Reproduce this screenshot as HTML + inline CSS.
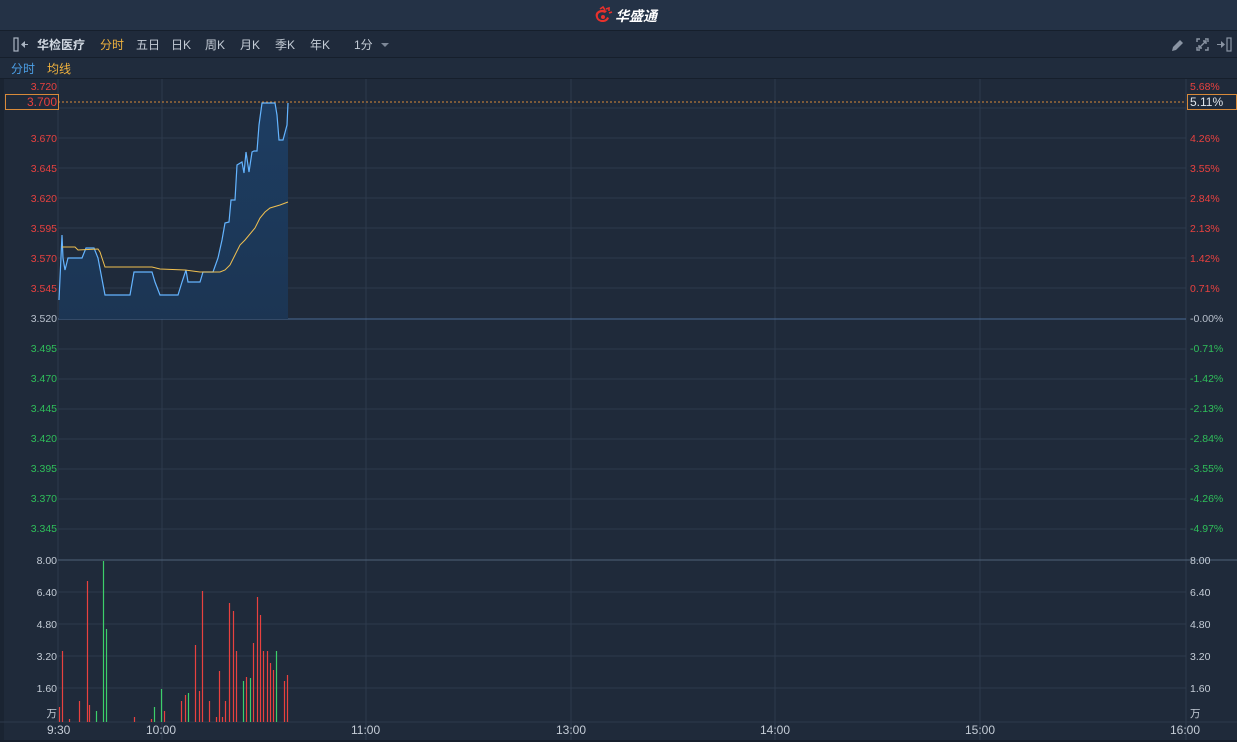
<!DOCTYPE html>
<html><head><meta charset="utf-8"><style>
html,body{margin:0;padding:0;background:#1f2a3a;width:1237px;height:742px;overflow:hidden}
svg{display:block}
text{font-family:"Liberation Sans","Noto Sans CJK SC",sans-serif}
</style></head><body>
<svg width="1237" height="742" viewBox="0 0 1237 742">
<defs><linearGradient id="af" x1="0" y1="0" x2="0" y2="1"><stop offset="0" stop-color="#1d3d62"/><stop offset="1" stop-color="#1c3553"/></linearGradient></defs>
<rect width="1237" height="742" fill="#1f2a3a"/>
<rect x="0" y="0" width="1237" height="30" fill="#243246"/>
<rect x="0" y="30" width="1237" height="1" fill="#161f2c"/>
<g transform="translate(594,7)">
<path d="M2 10 C0 4 8 1 13 4 L11 6 C7 4 3 6 4 10 C5 14 12 14 13 10 L15 11 C13 17 3 16 2 10Z" fill="#e8312c"/>
<path d="M6 2 L9 0 L11 3 M12 2 L15 1 L15 4 M15 6 L18 5" stroke="#e8312c" stroke-width="1.6" fill="none"/>
<circle cx="9" cy="10" r="2" fill="#e8312c"/>
</g>
<text x="615" y="21" font-size="14" font-weight="bold" fill="#ffffff" font-style="italic">华盛通</text>
<rect x="0" y="31" width="1237" height="27" fill="#1f2a3b"/>
<rect x="0" y="57" width="1237" height="1" fill="#161f2c"/>
<rect x="14" y="38" width="4" height="13" fill="none" stroke="#aab4c2" stroke-width="1.2"/>
<path d="M21 44.5 L25 41 L25 48Z M24 44 h4 v1 h-4z" fill="#aab4c2"/>
<g font-size="12" fill="#c4ccd6">
<text x="37" y="49" font-weight="bold" fill="#d2d9e2">华检医疗</text>
<text x="100" y="49" fill="#f0b23e">分时</text>
<text x="136" y="49">五日</text>
<text x="171" y="49">日K</text>
<text x="205" y="49">周K</text>
<text x="240" y="49">月K</text>
<text x="275" y="49">季K</text>
<text x="310" y="49">年K</text>
<text x="354" y="49">1分</text>
</g>
<path d="M381 43 L389 43 L385 47Z" fill="#7d8898"/>
<path d="M1172 51 L1173 47 L1180 40 L1183 43 L1176 50Z" fill="#8a94a3"/>
<g stroke="#8a94a3" stroke-width="1.4" fill="none">
<path d="M1197 42 v-3 h3 M1205 39 h3 v3 M1208 47 v3 h-3 M1200 50 h-3 v-3"/>
<path d="M1199 48 L1206 41 M1203 41 h3 v3 M1199 45 v3 h3"/>
</g>
<path d="M1217 44 h4 v-3 l4 3.5 l-4 3.5 v-3 h-4z" fill="#8a94a3"/>
<rect x="1227" y="38" width="4" height="13" fill="none" stroke="#8a94a3" stroke-width="1.2"/>
<rect x="0" y="58" width="1237" height="21" fill="#202c3d"/>
<rect x="0" y="78" width="1237" height="1" fill="#161f2c"/>
<text x="11" y="73" font-size="12" fill="#4c9fe6">分时</text>
<text x="47" y="73" font-size="12" fill="#f0b23e">均线</text>
<rect x="0" y="79" width="4" height="663" fill="#1a2432"/>
<g stroke="#2d3a4c" stroke-width="1">
<line x1="58" y1="79" x2="58" y2="722"/>
<line x1="1186" y1="79" x2="1186" y2="742"/>
<line x1="162" y1="79" x2="162" y2="742"/>
<line x1="366" y1="79" x2="366" y2="742"/>
<line x1="571" y1="79" x2="571" y2="742"/>
<line x1="775" y1="79" x2="775" y2="742"/>
<line x1="980" y1="79" x2="980" y2="742"/>
<line x1="58" y1="108" x2="1186" y2="108"/>
<line x1="58" y1="138" x2="1186" y2="138"/>
<line x1="58" y1="168" x2="1186" y2="168"/>
<line x1="58" y1="198" x2="1186" y2="198"/>
<line x1="58" y1="228" x2="1186" y2="228"/>
<line x1="58" y1="258" x2="1186" y2="258"/>
<line x1="58" y1="288" x2="1186" y2="288"/>
<line x1="58" y1="349" x2="1186" y2="349"/>
<line x1="58" y1="379" x2="1186" y2="379"/>
<line x1="58" y1="409" x2="1186" y2="409"/>
<line x1="58" y1="439" x2="1186" y2="439"/>
<line x1="58" y1="469" x2="1186" y2="469"/>
<line x1="58" y1="499" x2="1186" y2="499"/>
<line x1="58" y1="529" x2="1186" y2="529"/>
<line x1="58" y1="592" x2="1186" y2="592"/>
<line x1="58" y1="624" x2="1186" y2="624"/>
<line x1="58" y1="656" x2="1186" y2="656"/>
<line x1="58" y1="688" x2="1186" y2="688"/>
<line x1="0" y1="722" x2="1237" y2="722"/>
</g>
<line x1="58" y1="319" x2="1186" y2="319" stroke="#4a6a94" stroke-width="1"/>
<line x1="58" y1="560" x2="1237" y2="560" stroke="#4f6278" stroke-width="1"/>
<path d="M59 300 L62 235 L63 258 L65 270 L68 258 L82 258 L86 248 L94 248 L98 258 L105 295 L130 295 L134 272 L152 272 L155 282 L160 295 L178 295 L182 282 L186 270 L188 282 L200 282 L203 272 L213 272 L218 258 L222 240 L225 223 L229 222 L231 200 L235 200 L237 165 L242 162 L244 173 L246 152 L249 172 L252 152 L254 151 L257 151 L259 125 L262 103 L275 103 L277 115 L279 140 L283 140 L287 125 L288 103 L288 319 L59 319Z" fill="url(#af)"/>
<path d="M59 300 L62 235 L63 258 L65 270 L68 258 L82 258 L86 248 L94 248 L98 258 L105 295 L130 295 L134 272 L152 272 L155 282 L160 295 L178 295 L182 282 L186 270 L188 282 L200 282 L203 272 L213 272 L218 258 L222 240 L225 223 L229 222 L231 200 L235 200 L237 165 L242 162 L244 173 L246 152 L249 172 L252 152 L254 151 L257 151 L259 125 L262 103 L275 103 L277 115 L279 140 L283 140 L287 125 L288 103" fill="none" stroke="#64b4ff" stroke-width="1.2"/>
<path d="M62 247 L75 247 L78 250 L98 249 L100 252 L105 267 L152 267 L160 269 L185 270 L200 272 L220 272 L225 270 L230 265 L235 255 L240 245 L245 240 L255 228 L260 218 L265 212 L270 208 L280 205 L288 202" fill="none" stroke="#f0c050" stroke-width="1"/>
<line x1="58" y1="102" x2="1186" y2="102" stroke="#d88a3a" stroke-width="1" stroke-dasharray="2,2"/>
<g font-size="10.5" text-anchor="end">
<g fill="#e8413f">
<text x="57" y="90">3.720</text>
<text x="57" y="142">3.670</text>
<text x="57" y="172">3.645</text>
<text x="57" y="202">3.620</text>
<text x="57" y="232">3.595</text>
<text x="57" y="262">3.570</text>
<text x="57" y="292">3.545</text>
</g>
<text x="57" y="322" fill="#b8c0cc">3.520</text>
<g fill="#2fbf5a">
<text x="57" y="352">3.495</text>
<text x="57" y="382">3.470</text>
<text x="57" y="412">3.445</text>
<text x="57" y="442">3.420</text>
<text x="57" y="472">3.395</text>
<text x="57" y="502">3.370</text>
<text x="57" y="532">3.345</text>
</g>
<g fill="#c4ccd6">
<text x="57" y="564">8.00</text>
<text x="57" y="596">6.40</text>
<text x="57" y="628">4.80</text>
<text x="57" y="660">3.20</text>
<text x="57" y="692">1.60</text>
<text x="57" y="717">万</text>
</g>
</g>
<rect x="5.5" y="94.5" width="53" height="15" fill="#1f2a3a" stroke="#d88a3a"/>
<text x="57" y="106" font-size="12" text-anchor="end" fill="#e8413f">3.700</text>
<g font-size="10.5">
<g fill="#e8413f">
<text x="1190" y="90">5.68%</text>
<text x="1190" y="142">4.26%</text>
<text x="1190" y="172">3.55%</text>
<text x="1190" y="202">2.84%</text>
<text x="1190" y="232">2.13%</text>
<text x="1190" y="262">1.42%</text>
<text x="1190" y="292">0.71%</text>
</g>
<text x="1190" y="322" fill="#b8c0cc">-0.00%</text>
<g fill="#2fbf5a">
<text x="1190" y="352">-0.71%</text>
<text x="1190" y="382">-1.42%</text>
<text x="1190" y="412">-2.13%</text>
<text x="1190" y="442">-2.84%</text>
<text x="1190" y="472">-3.55%</text>
<text x="1190" y="502">-4.26%</text>
<text x="1190" y="532">-4.97%</text>
</g>
<g fill="#c4ccd6">
<text x="1190" y="564">8.00</text>
<text x="1190" y="596">6.40</text>
<text x="1190" y="628">4.80</text>
<text x="1190" y="660">3.20</text>
<text x="1190" y="692">1.60</text>
<text x="1190" y="717">万</text>
</g>
</g>
<rect x="1187.5" y="94.5" width="49" height="15" fill="#1f2a3a" stroke="#d88a3a"/>
<text x="1190" y="106" font-size="12" fill="#dfe5ec">5.11%</text>
<g stroke-width="1.2">
<g stroke="#e8413f">
<line x1="59.5" y1="707" x2="59.5" y2="722"/><line x1="62.5" y1="651" x2="62.5" y2="722"/>
<line x1="69.5" y1="719" x2="69.5" y2="722"/><line x1="79.5" y1="701" x2="79.5" y2="722"/>
<line x1="87.5" y1="581" x2="87.5" y2="722"/><line x1="89.5" y1="705" x2="89.5" y2="722"/>
<line x1="134.5" y1="717" x2="134.5" y2="722"/><line x1="151.5" y1="719" x2="151.5" y2="722"/>
<line x1="164.5" y1="711" x2="164.5" y2="722"/><line x1="181.5" y1="701" x2="181.5" y2="722"/>
<line x1="185.5" y1="695" x2="185.5" y2="722"/><line x1="195.5" y1="645" x2="195.5" y2="722"/>
<line x1="199.5" y1="691" x2="199.5" y2="722"/><line x1="202.5" y1="591" x2="202.5" y2="722"/>
<line x1="209.5" y1="701" x2="209.5" y2="722"/><line x1="216.5" y1="717" x2="216.5" y2="722"/>
<line x1="219.5" y1="671" x2="219.5" y2="722"/><line x1="222.5" y1="717" x2="222.5" y2="722"/>
<line x1="225.5" y1="701" x2="225.5" y2="722"/><line x1="229.5" y1="603" x2="229.5" y2="722"/>
<line x1="233.5" y1="611" x2="233.5" y2="722"/><line x1="236.5" y1="651" x2="236.5" y2="722"/>
<line x1="246.5" y1="677" x2="246.5" y2="722"/><line x1="253.5" y1="643" x2="253.5" y2="722"/>
<line x1="257.5" y1="597" x2="257.5" y2="722"/><line x1="260.5" y1="615" x2="260.5" y2="722"/>
<line x1="263.5" y1="651" x2="263.5" y2="722"/><line x1="267.5" y1="651" x2="267.5" y2="722"/>
<line x1="270.5" y1="663" x2="270.5" y2="722"/><line x1="273.5" y1="670" x2="273.5" y2="722"/>
<line x1="284.5" y1="681" x2="284.5" y2="722"/><line x1="287.5" y1="675" x2="287.5" y2="722"/>
</g>
<g stroke="#3ccf6a">
<line x1="96.5" y1="711" x2="96.5" y2="722"/><line x1="103.5" y1="561" x2="103.5" y2="722"/>
<line x1="106.5" y1="629" x2="106.5" y2="722"/><line x1="154.5" y1="707" x2="154.5" y2="722"/>
<line x1="161.5" y1="689" x2="161.5" y2="722"/><line x1="188.5" y1="693" x2="188.5" y2="722"/>
<line x1="243.5" y1="681" x2="243.5" y2="722"/><line x1="250.5" y1="678" x2="250.5" y2="722"/>
<line x1="276.5" y1="651" x2="276.5" y2="722"/>
</g>
</g>
<g font-size="12" fill="#c4ccd6">
<text x="47" y="734">9:30</text>
<text x="146" y="734">10:00</text>
<text x="351" y="734">11:00</text>
<text x="556" y="734">13:00</text>
<text x="760" y="734">14:00</text>
<text x="965" y="734">15:00</text>
<text x="1170" y="734">16:00</text>
</g>
<rect x="0" y="740" width="1237" height="2" fill="#161f2c"/>
</svg>
</body></html>
